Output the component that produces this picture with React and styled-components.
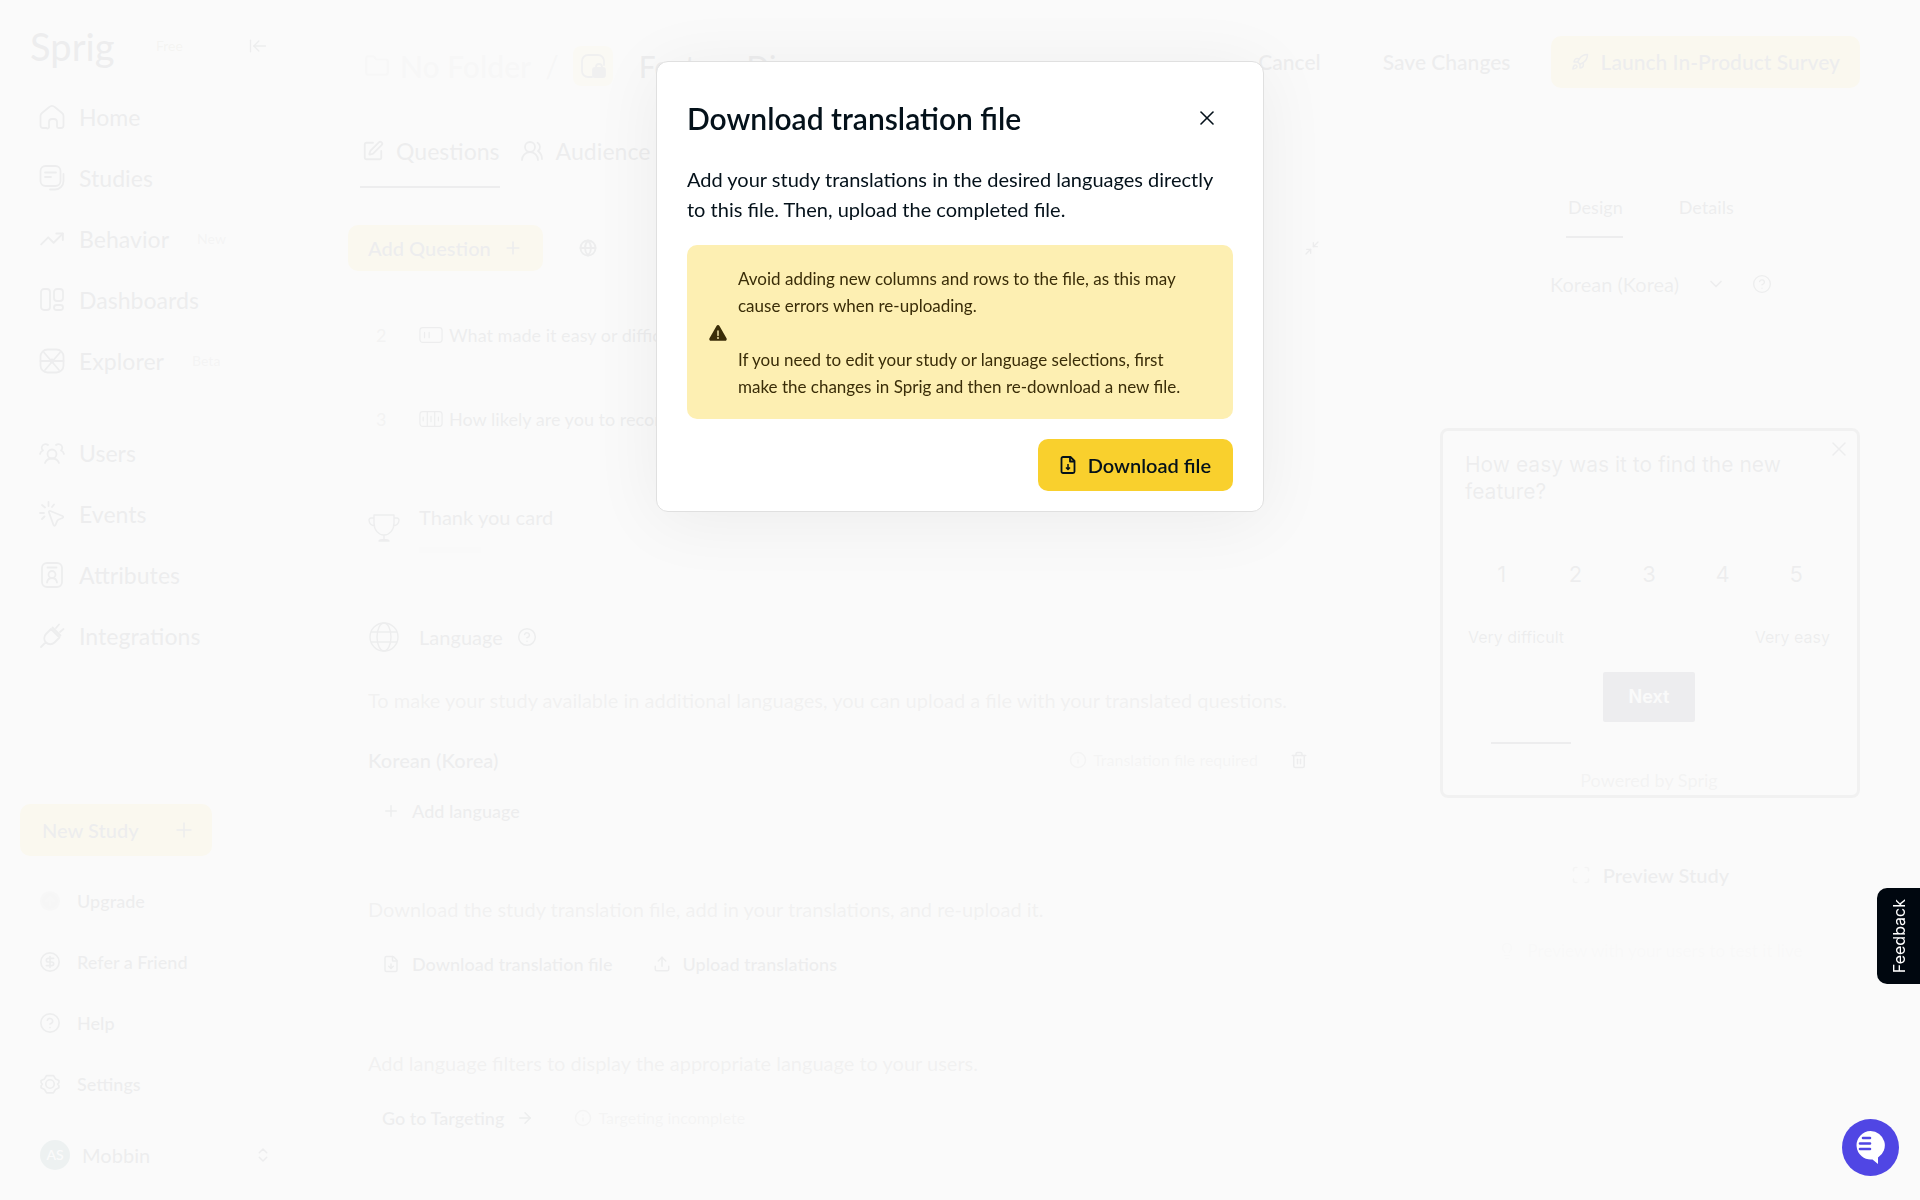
import styled, { createGlobalStyle, css } from 'styled-components';
import {
    ArrowLeftToLine, ArrowRight, ChevronDown, ChevronsUpDown, CircleArrowUp, CircleDollarSign,
    CircleHelp, FileDown, Folder, Globe, Info, Lightbulb, Minimize2, Plus,
    Rocket, Scan, SquarePen, Trash2, TrendingUp, Upload, UsersRound, X
} from 'lucide-react';

const GlobalStyle = createGlobalStyle`
    * {
        box-sizing: border-box;
    }

    body {
        margin: 0;
        background-color: #fafafa;
        color: #04111a;
        font-family: Lato, "Liberation Sans", sans-serif;
        font-size: 20px;
        line-height: 30px;
    }

    button, select {
        font: inherit;
        color: inherit;
        background: none;
        border: 0;
        padding: 0;
        cursor: pointer;
    }

    a {
        color: inherit;
        text-decoration: none;
    }

    p, h1, h2 {
        margin: 0;
    }

    svg {
        flex-shrink: 0;
    }
`

const Shell = styled.div`
    display: flex;
    min-height: 100vh;
`

const Sidebar = styled.aside`
    display: flex;
    flex-direction: column;
    width: 288px;
    flex-shrink: 0;
    padding: 16px 16px 4px 20px;
`

const SidebarTop = styled.div`
    display: flex;
    align-items: center;
    height: 60px;
    padding: 0 4px 0 10px;
    margin-bottom: 10px;
`

const Logo = styled.span`
    width: 126px;
    font-size: 38px;
    font-weight: 500;
`

const Badge = styled.span`
    font-size: 14px;
    color: ${props => props.$color || '#8a8a8a'};
`

const CollapseButton = styled.button`
    display: flex;
    margin-left: auto;
`

const NavGroup = styled.nav`
    display: flex;
    flex-direction: column;
    margin-bottom: 31px;
`

const NavLink = styled.a`
    display: flex;
    align-items: center;
    gap: 14px;
    height: 61px;
    padding-left: 19px;
    font-size: 23px;
    font-weight: 500;

    ${Badge} {
        margin-left: 14px;
    }
`

const SidebarBottom = styled.div`
    margin-top: auto;
`

const YellowButton = styled.button`
    display: flex;
    align-items: center;
    justify-content: center;
    gap: 12px;
    height: ${props => props.$height || 52}px;
    padding: 0 ${props => props.$pad || 22}px;
    border-radius: 10px;
    background-color: #f9d02d;
    font-weight: 600;
`

const NewStudy = styled(YellowButton)`
    width: 192px;
    padding-right: 16px;
    margin-bottom: 14px;
    justify-content: space-between;
`

const UtilityLink = styled(NavLink)`
    gap: 16px;
    font-size: 18px;
    font-weight: 600;
`

const Account = styled.button`
    display: flex;
    align-items: center;
    gap: 12px;
    width: 100%;
    height: 82px;
    padding-left: 20px;
    font-weight: 500;

    svg {
        margin-left: auto;
    }
`

const Avatar = styled.span`
    display: grid;
    place-items: center;
    width: 30px;
    height: 30px;
    border-radius: 50%;
    background-color: #0f5257;
    color: #ffffff;
    font-size: 14px;
`

const Content = styled.div`
    display: flex;
    flex-direction: column;
    flex: 1;
    min-width: 0;
    padding: 36px 60px 40px;
`

const Header = styled.header`
    display: flex;
    align-items: flex-end;
    justify-content: space-between;
    height: 52px;
`

const Breadcrumbs = styled.div`
    display: flex;
    align-items: center;
    gap: 10px;
    height: 44px;
    padding-left: 16px;
    font-size: 30px;
    color: #b0b0b0;
`

const FolderName = styled.span`
    display: flex;
    align-items: center;
    gap: 10px;
    margin-right: 4px;
    font-weight: 600;
    color: #c0c0c0;
`

const StudyType = styled.span`
    display: grid;
    place-items: center;
    width: 40px;
    height: 40px;
    margin: 0 16px 0 4px;
    border-radius: 8px;
    background-color: #fbe68c;
    color: #3a4046;
`

const StudyTitle = styled.h1`
    font-size: 30px;
    font-weight: 500;
    color: #04111a;
`

const Actions = styled.div`
    display: flex;
    align-items: center;
    font-size: 21px;
`

const TextAction = styled.button`
    font-weight: 600;
    margin-right: ${props => props.$space}px;
`

const Columns = styled.div`
    display: grid;
    grid-template-columns: minmax(0, 1fr) 420px;
    gap: 120px;
`

const Editor = styled.main`
    padding-top: 48px;
`

const Tabs = styled.div`
    display: flex;
    gap: ${props => props.$gap}px;
    padding-left: ${props => props.$indent || 0}px;
`

const Tab = styled.button`
    display: flex;
    align-items: center;
    gap: 12px;
    padding: 0 0 ${props => props.$small ? 17 : 20}px 2px;
    font-size: ${props => props.$small ? 18 : 23}px;
    line-height: ${props => props.$small ? 24 : 30}px;
    font-weight: 500;
    border-bottom: 2px solid ${props => props.$active ? '#04111a' : 'transparent'};
`

const Toolbar = styled.div`
    display: flex;
    align-items: center;
    gap: 36px;
    margin-top: 37px;
`

const ToolButton = styled.button`
    display: flex;
    margin-left: ${props => props.$end ? 'auto' : 0};
`

const QuestionList = styled.ol`
    list-style: none;
    margin: 22px 0 0;
    padding: 0 0 0 28px;
`

const Question = styled.li`
    display: flex;
    align-items: center;
    height: 84px;
    font-size: 18px;
    font-weight: 500;
    white-space: nowrap;
`

const QuestionNumber = styled.span`
    width: 43px;
    color: #6f6f6f;
`

const QuestionIcon = styled.span`
    display: flex;
    width: 30px;
`

const Section = styled.section`
    display: flex;
    flex-direction: column;
    padding-left: 20px;
    margin-top: ${props => props.$top}px;
`

const SectionTitle = styled.h2`
    display: flex;
    align-items: center;
    min-height: 40px;
    font-size: 20px;
    line-height: 28px;
    font-weight: 500;

    > svg:first-child {
        margin-right: 19px;
    }

    > svg:last-child {
        margin-left: 14px;
    }
`

const ThankYou = styled.div`
    display: flex;
    flex-direction: column;
`

const Placeholder = styled.span`
    width: 62px;
    height: 6px;
    margin-top: 16px;
    background-color: #dcdcdc;
`

const Note = styled.p`
    margin-top: 28px;
    color: #4d4d4d;
    white-space: nowrap;
`

const LanguageRow = styled.div`
    display: flex;
    align-items: center;
    height: 40px;
    margin-top: 25px;
    font-weight: 600;
`

const Status = styled.span`
    display: flex;
    align-items: center;
    gap: 6px;
    margin-left: ${props => props.$end ? 'auto' : 0};
    font-size: 16px;
    font-weight: 400;
    color: #8a8a8a;
`

const DeleteButton = styled.button`
    display: flex;
    margin: 0 12px 0 32px;
`

const ButtonRow = styled.div`
    display: flex;
    align-items: center;
    gap: 40px;
    height: 40px;
    padding-left: 14px;
    margin-top: ${props => props.$top}px;
`

const PlainButton = styled.button`
    display: flex;
    align-items: center;
    gap: 12px;
    font-size: 18px;
    font-weight: 600;
`

const Preview = styled.section`
    display: flex;
    flex-direction: column;
    padding-top: 107px;
`

const LanguagePicker = styled.div`
    display: flex;
    align-items: center;
    gap: 26px;
    height: 40px;
    margin-top: 26px;
    padding-left: 110px;
`

const SelectBox = styled.label`
    display: flex;
    align-items: center;
    gap: 26px;
`

const Select = styled.select`
    appearance: none;
`

const SurveyCard = styled.div`
    display: flex;
    flex-direction: column;
    position: relative;
    margin-top: 124px;
    padding: 20px 24px 0 22px;
    border: 3px solid #5a5a5a;
    border-radius: 8px;
    font-family: Inter, sans-serif;
`

const SurveyClose = styled.button`
    position: absolute;
    top: 6px;
    right: 6px;
    display: flex;
`

const SurveyQuestion = styled.p`
    padding-right: 48px;
    font-size: 21px;
    line-height: 27px;
`

const Scale = styled.div`
    display: flex;
    margin-top: 45px;
`

const ScaleOption = styled.button`
    flex: 1;
    height: 48px;
    font-size: 22px;
`

const ScaleLabels = styled.div`
    display: flex;
    justify-content: space-between;
    margin-top: 24px;
    padding: 0 3px;
    font-size: 16px;
`

const NextButton = styled.button`
    align-self: center;
    width: 92px;
    height: 50px;
    margin-top: 20px;
    border-radius: 2px;
    background-color: #10122b;
    color: #ffffff;
    font-size: 18px;
    font-weight: 600;
`

const Progress = styled.div`
    width: 80px;
    height: 2px;
    margin: 20px 0 0 26px;
    background-color: #04111a;
`

const PoweredBy = styled.p`
    margin-top: 21px;
    text-align: center;
    font-family: Lato, sans-serif;
    font-size: 18px;
    color: #6f6f6f;
`

const PreviewButton = styled.button`
    display: flex;
    align-items: center;
    align-self: center;
    gap: 12px;
    height: 48px;
    margin-top: 53px;
    font-weight: 600;

    svg {
        color: #8a8a8a;
    }
`

const Hint = styled.p`
    display: flex;
    align-items: center;
    justify-content: center;
    gap: 12px;
    margin-top: 37px;
    font-size: 17px;
    color: #d4d4d4;
`

const Overlay = styled.div`
    position: fixed;
    inset: 0;
    display: flex;
    justify-content: center;
    align-items: flex-start;
    padding-top: 61px;
    background-color: rgba(250, 250, 250, 0.95);
`

const Dialog = styled.div`
    width: 608px;
    padding: 30px 30px 20px;
    border: 1px solid #e0e0e0;
    border-radius: 12px;
    background-color: #ffffff;
    box-shadow: 0 8px 70px rgba(0, 0, 0, 0.06);
`

const DialogHeader = styled.div`
    display: flex;
    align-items: center;
    justify-content: space-between;
    height: 52px;
    padding-right: 14px;
`

const DialogTitle = styled.h2`
    font-size: 30px;
    line-height: 36px;
    font-weight: 600;
`

const CloseButton = styled.button`
    display: flex;
`

const DialogText = styled.p`
    margin-top: 20px;
`

const Warning = styled.div`
    display: flex;
    align-items: center;
    gap: 10px;
    margin-top: 21px;
    padding: 20px 32px 19px 21px;
    border-radius: 10px;
    background-color: #fdefb2;
    color: #3a2d08;
    font-size: 17px;
    line-height: 27px;
`

const WarningText = styled.div`
    p + p {
        margin-top: 27px;
    }
`

const DialogFooter = styled.div`
    display: flex;
    justify-content: flex-end;
    margin-top: 20px;
`

const Floating = css`
    position: fixed;
    display: grid;
    place-items: center;
`

const FeedbackTab = styled.button`
    ${Floating}
    top: 74%;
    right: 0;
    width: 43px;
    height: 96px;
    border-radius: 10px 0 0 10px;
    background-color: #00070f;
    color: #ffffff;
    font-family: Inter, sans-serif;
    font-size: 16px;
    line-height: 20px;

    span {
        writing-mode: vertical-rl;
        transform: rotate(180deg);
    }
`

const ChatButton = styled.button`
    ${Floating}
    right: 21px;
    bottom: 24px;
    width: 57px;
    height: 57px;
    border-radius: 50%;
    background-color: #5046e4;
`

const Icon = ({ size = 26, width = 1.8, children }) => (
    <svg width={size} height={size} viewBox="0 0 26 26" fill="none" stroke="currentColor"
        strokeWidth={width} strokeLinecap="round" strokeLinejoin="round" aria-hidden="true">
        {children}
    </svg>
)

const HomeIcon = () => (
    <Icon>
        <path d="M1.5 12a4 4 0 0 1 1.5-3L10 3.2a4.6 4.6 0 0 1 6 0L23 9a4 4 0 0 1 1.5 3v9.5a2.5 2.5 0 0 1-2.5 2.5h-2.500a1.5 1.5 0 0 1-1.5-1.5V18a3 3 0 0 0-3-3h-2a3 3 0 0 0-3 3v4.5A1.5 1.5 0 0 1 7.5 24H4a2.5 2.5 0 0 1-2.500-2.500z" />
    </Icon>
)

const StudiesIcon = () => (
    <Icon>
        <rect x="1.5" y="1" width="20" height="20" rx="5" />
        <path d="M6 7.5h11M6 12h6M24.5 9v7a8.5 8.5 0 0 1-8.5 8.5h-5" />
    </Icon>
)

const DashboardsIcon = () => (
    <Icon>
        <rect x="2" y="2" width="9" height="21" rx="3" />
        <rect x="15" y="2" width="9" height="12" rx="3" />
        <rect x="15" y="18" width="9" height="5" rx="2.5" />
    </Icon>
)

const ExplorerIcon = () => (
    <Icon>
        <rect x="1.5" y="1.5" width="23" height="23" rx="7" />
        <path d="M5 4.5L20 22M21 4.5L6 22M1.5 13h23" />
        <circle cx="13" cy="13" r="1.5" />
    </Icon>
)

const UsersIcon = () => (
    <Icon>
        <circle cx="13" cy="14" r="4.5" />
        <path d="M6 23c1-3 3.5-4.5 7-4.5s6 1.5 7 4.5M1 14c.5-2 1.5-3 3-3.5A3.7 3.7 0 1 1 9 5M25 14c-.5-2-1.5-3-3-3.5A3.7 3.7 0 1 0 17 5" />
    </Icon>
)

const EventsIcon = () => (
    <Icon>
        <path d="M10 11.5c-.5-1 .3-1.8 1.3-1.5l12.2 5c1 .4 1 1.6 0 2l-3.8 1.5a3 3 0 0 0-1.5 1.4L16.5 24c-.4 1-1.6 1-2 0zM9.5 1v4M3 4l3 2.5M1 12h4M3 18l2.5-2.5M15 3.5L13 6" />
    </Icon>
)

const AttributesIcon = () => (
    <Icon>
        <rect x="3" y="1" width="20" height="24" rx="5" />
        <path d="M8.5 5.5h9M8 20.5c.5-3 2-4.5 5-4.5s4.5 1.5 5 4.5" />
        <circle cx="13" cy="12.5" r="3.5" />
    </Icon>
)

const IntegrationsIcon = () => (
    <Icon>
        <path d="M2 24l4.5-4.5M13.5 4.5l8 8M17 5l3-3.5M21 9l3.5-3M12 6L7 11a6 6 0 0 0 8.5 8.5L20.5 14.5z" />
    </Icon>
)

const SettingsIcon = () => (
    <Icon size={22} width={2}>
        <path d="M9 3h8l2.5 4 4 2v2.5L22 13l1.5 2v2.5l-4 2L17 23.5H9l-2.5-4-4-2V15L4 13l-1.5-1.5V9l4-2z" />
        <circle cx="13" cy="13" r="5" />
    </Icon>
)

const SurveyTypeIcon = () => (
    <Icon>
        <path d="M12 24H8a6 6 0 0 1-6-6V8a6 6 0 0 1 6-6h10a6 6 0 0 1 6 6v4" />
        <path d="M16 15v-1a3 3 0 0 1 6 0v1" />
        <rect x="13" y="15" width="12" height="9" rx="2" fill="currentColor" />
    </Icon>
)

const TextFieldIcon = () => (
    <Icon size={24} width={1.3}>
        <rect x="1" y="5" width="24" height="16" rx="3" />
        <path d="M6 10v6M11 10v6" />
    </Icon>
)

const RatingIcon = () => (
    <Icon size={24} width={1.3}>
        <rect x="1" y="5" width="24" height="16" rx="3" />
        <path d="M9 5v16M17 5v16M4.5 11v4M13 10v6M21 11v4" />
    </Icon>
)

const TrophyIcon = () => (
    <svg width="32" height="28" viewBox="0 0 32 28" fill="none" stroke="currentColor" strokeWidth="1.4" strokeLinejoin="round" aria-hidden="true">
        <path d="M6 1h20v8c0 7-4.5 12-10 12S6 16 6 9zM6 4H3a2 2 0 0 0-2 2.2C1.3 10 3.5 11.5 7 12M26 4h3a2 2 0 0 1 2 2.2c-.3 3.8-2.5 5.3-6 5.8M16 21v5M11 27c1-2 9-2 10 0z" />
    </svg>
)

const LanguageIcon = () => (
    <svg width="32" height="32" viewBox="0 0 32 32" fill="none" stroke="currentColor" strokeWidth="1.4" aria-hidden="true">
        <circle cx="16" cy="16" r="14" />
        <ellipse cx="16" cy="16" rx="7" ry="14" />
        <path d="M3 11h26M3 21h26" />
    </svg>
)

const WarningIcon = () => (
    <svg width="20" height="18" viewBox="0 0 20 18" aria-hidden="true">
        <path d="M8.5 1.9a1.7 1.7 0 0 1 3 0l7 12.3a1.7 1.7 0 0 1-1.5 2.6H3a1.7 1.7 0 0 1-1.5-2.6z" fill="#3a2d08" />
        <path d="M10 7v4.5" stroke="#fdefb2" strokeWidth="1.4" strokeLinecap="round" />
        <circle cx="10" cy="14" r="0.9" fill="#fdefb2" />
    </svg>
)

const DownloadFileIcon = () => (
    <svg width="16" height="18" viewBox="0 0 16 18" fill="none" stroke="currentColor" strokeWidth="1.8" strokeLinejoin="round" aria-hidden="true">
        <path d="M1.5 2.5A1.5 1.5 0 0 1 3 1h7.5l4 4v10.5A1.5 1.5 0 0 1 13 17H3a1.5 1.5 0 0 1-1.5-1.5z" />
        <path d="M10 1v4.5h4.5" />
        <path d="M8 8v5M6 11.5l2 2 2-2" strokeWidth="1.5" />
    </svg>
)

const ChatIcon = () => (
    <svg width="30" height="33" viewBox="0 0 30 33" aria-hidden="true">
        <path d="M14.5 0a14.3 14.3 0 1 0 2 28.5L22 33v-6.5A14.3 14.3 0 0 0 14.5 0z" fill="#ffffff" />
        <path d="M7 7h7M4 12.5h10M4 18h10" stroke="#5046e4" strokeWidth="2.6" strokeLinecap="round" />
    </svg>
)

const primaryNav = [
    { label: 'Home', icon: <HomeIcon /> },
    { label: 'Studies', icon: <StudiesIcon /> },
    { label: 'Behavior', icon: <TrendingUp size={26} strokeWidth={1.8} />, badge: 'New' },
    { label: 'Dashboards', icon: <DashboardsIcon /> },
    { label: 'Explorer', icon: <ExplorerIcon />, badge: 'Beta' }
]

const dataNav = [
    { label: 'Users', icon: <UsersIcon /> },
    { label: 'Events', icon: <EventsIcon /> },
    { label: 'Attributes', icon: <AttributesIcon /> },
    { label: 'Integrations', icon: <IntegrationsIcon /> }
]

const utilities = [
    { label: 'Upgrade', icon: <CircleArrowUp size={22} fill="#b5b5b5" stroke="#c8c8c8" /> },
    { label: 'Refer a Friend', icon: <CircleDollarSign size={22} strokeWidth={1.8} /> },
    { label: 'Help', icon: <CircleHelp size={22} strokeWidth={1.8} /> },
    { label: 'Settings', icon: <SettingsIcon /> }
]

const questions = [
    { number: 2, icon: <TextFieldIcon />, text: 'What made it easy or difficult?' },
    { number: 3, icon: <RatingIcon />, text: 'How likely are you to recommend us?' }
]

const Nav = ({ items, label }) => (
    <NavGroup aria-label={label}>
        {
            items.map(item => (
                <NavLink key={item.label} href="#">
                    {item.icon}
                    {item.label}
                    {item.badge && <Badge>{item.badge}</Badge>}
                </NavLink>
            ))
        }
    </NavGroup>
)

const AppSidebar = () => (
    <Sidebar>
        <SidebarTop>
            <Logo>Sprig</Logo>
            <Badge $color="#8f8a5c">Free</Badge>
            <CollapseButton aria-label="Collapse sidebar"><ArrowLeftToLine size={20} strokeWidth={1.6} /></CollapseButton>
        </SidebarTop>
        <Nav items={primaryNav} label="Product" />
        <Nav items={dataNav} label="Data" />
        <SidebarBottom>
            <NewStudy>New Study <Plus size={24} strokeWidth={1.5} /></NewStudy>
            {
                utilities.map(item => (
                    <UtilityLink key={item.label} href="#">{item.icon}{item.label}</UtilityLink>
                ))
            }
            <Account>
                <Avatar>AS</Avatar>
                Mobbin
                <ChevronsUpDown size={18} />
            </Account>
        </SidebarBottom>
    </Sidebar>
)

const StudyHeader = () => (
    <Header>
        <Breadcrumbs>
            <FolderName><Folder size={26} />No Folder</FolderName>
            /
            <StudyType><SurveyTypeIcon /></StudyType>
            <StudyTitle>Feature Discovery</StudyTitle>
        </Breadcrumbs>
        <Actions>
            <TextAction $space={62}>Cancel</TextAction>
            <TextAction $space={40}>Save Changes</TextAction>
            <YellowButton $pad={20}><Rocket size={18} />Launch In-Product Survey</YellowButton>
        </Actions>
    </Header>
)

const StudyEditor = () => (
    <Editor>
        <Tabs $gap={18} $indent={12}>
            <Tab $active><SquarePen size={22} />Questions</Tab>
            <Tab><UsersRound size={24} strokeWidth={1.8} />Audience</Tab>
        </Tabs>
        <Toolbar>
            <YellowButton $height={46} $pad={20}>Add Question <Plus size={20} /></YellowButton>
            <ToolButton aria-label="Translations"><Globe size={18} strokeWidth={2.5} /></ToolButton>
            <ToolButton $end aria-label="Collapse all"><Minimize2 size={16} /></ToolButton>
        </Toolbar>
        <QuestionList>
            {
                questions.map(question => (
                    <Question key={question.number}>
                        <QuestionNumber>{question.number}</QuestionNumber>
                        <QuestionIcon>{question.icon}</QuestionIcon>
                        {question.text}
                    </Question>
                ))
            }
        </QuestionList>
        <Section $top={42}>
            <SectionTitle>
                <TrophyIcon />
                <ThankYou>
                    Thank you card
                    <Placeholder />
                </ThankYou>
            </SectionTitle>
        </Section>
        <Section $top={64}>
            <SectionTitle>
                <LanguageIcon />
                Language
                <CircleHelp size={20} strokeWidth={1.8} />
            </SectionTitle>
            <Note>To make your study available in additional languages, you can upload a file with your translated questions.</Note>
            <LanguageRow>
                Korean (Korea)
                <Status $end><Info size={18} />Translation file required</Status>
                <DeleteButton aria-label="Remove Korean"><Trash2 size={18} /></DeleteButton>
            </LanguageRow>
            <ButtonRow $top={11}>
                <PlainButton><Plus size={18} />Add language</PlainButton>
            </ButtonRow>
        </Section>
        <Section $top={35}>
            <Note>Download the study translation file, add in your translations, and re-upload it.</Note>
            <ButtonRow $top={20}>
                <PlainButton><FileDown size={18} />Download translation file</PlainButton>
                <PlainButton><Upload size={18} />Upload translations</PlainButton>
            </ButtonRow>
        </Section>
        <Section $top={36}>
            <Note>Add language filters to display the appropriate language to your users.</Note>
            <ButtonRow $top={20}>
                <PlainButton>Go to Targeting <ArrowRight size={18} /></PlainButton>
                <Status><Info size={18} />Targeting incomplete</Status>
            </ButtonRow>
        </Section>
    </Editor>
)

const StudyPreview = () => (
    <Preview>
        <Tabs $gap={54} $indent={126}>
            <Tab $small $active>Design</Tab>
            <Tab $small>Details</Tab>
        </Tabs>
        <LanguagePicker>
            <SelectBox>
                <Select aria-label="Preview language">
                    <option>Korean (Korea)</option>
                </Select>
                <ChevronDown size={20} />
            </SelectBox>
            <CircleHelp size={20} strokeWidth={1.6} />
        </LanguagePicker>
        <SurveyCard>
            <SurveyClose aria-label="Close survey"><X size={24} strokeWidth={1.5} /></SurveyClose>
            <SurveyQuestion>How easy was it to find the new feature?</SurveyQuestion>
            <Scale>
                {[1, 2, 3, 4, 5].map(value => <ScaleOption key={value}>{value}</ScaleOption>)}
            </Scale>
            <ScaleLabels>
                <span>Very difficult</span>
                <span>Very easy</span>
            </ScaleLabels>
            <NextButton>Next</NextButton>
            <Progress />
            <PoweredBy>Powered by Sprig</PoweredBy>
        </SurveyCard>
        <PreviewButton><Scan size={20} />Preview Study</PreviewButton>
        <Hint><Lightbulb size={18} />Preview with your users to test it live</Hint>
    </Preview>
)

const DownloadDialog = () => (
    <Overlay>
        <Dialog role="dialog" aria-modal="true" aria-labelledby="dialog-title">
            <DialogHeader>
                <DialogTitle id="dialog-title">Download translation file</DialogTitle>
                <CloseButton aria-label="Close"><X size={24} strokeWidth={1.6} /></CloseButton>
            </DialogHeader>
            <DialogText>
                Add your study translations in the desired languages directly to this file. Then, upload the completed file.
            </DialogText>
            <Warning>
                <WarningIcon />
                <WarningText>
                    <p>Avoid adding new columns and rows to the file, as this may cause errors when re-uploading.</p>
                    <p>If you need to edit your study or language selections, first make the changes in Sprig and then re-download a new file.</p>
                </WarningText>
            </Warning>
            <DialogFooter>
                <YellowButton><DownloadFileIcon />Download file</YellowButton>
            </DialogFooter>
        </Dialog>
    </Overlay>
)

const App = () => (
    <>
        <GlobalStyle />
        <Shell>
            <AppSidebar />
            <Content>
                <StudyHeader />
                <Columns>
                    <StudyEditor />
                    <StudyPreview />
                </Columns>
            </Content>
        </Shell>
        <DownloadDialog />
        <FeedbackTab><span>Feedback</span></FeedbackTab>
        <ChatButton aria-label="Open chat"><ChatIcon /></ChatButton>
    </>
)

export default App;
